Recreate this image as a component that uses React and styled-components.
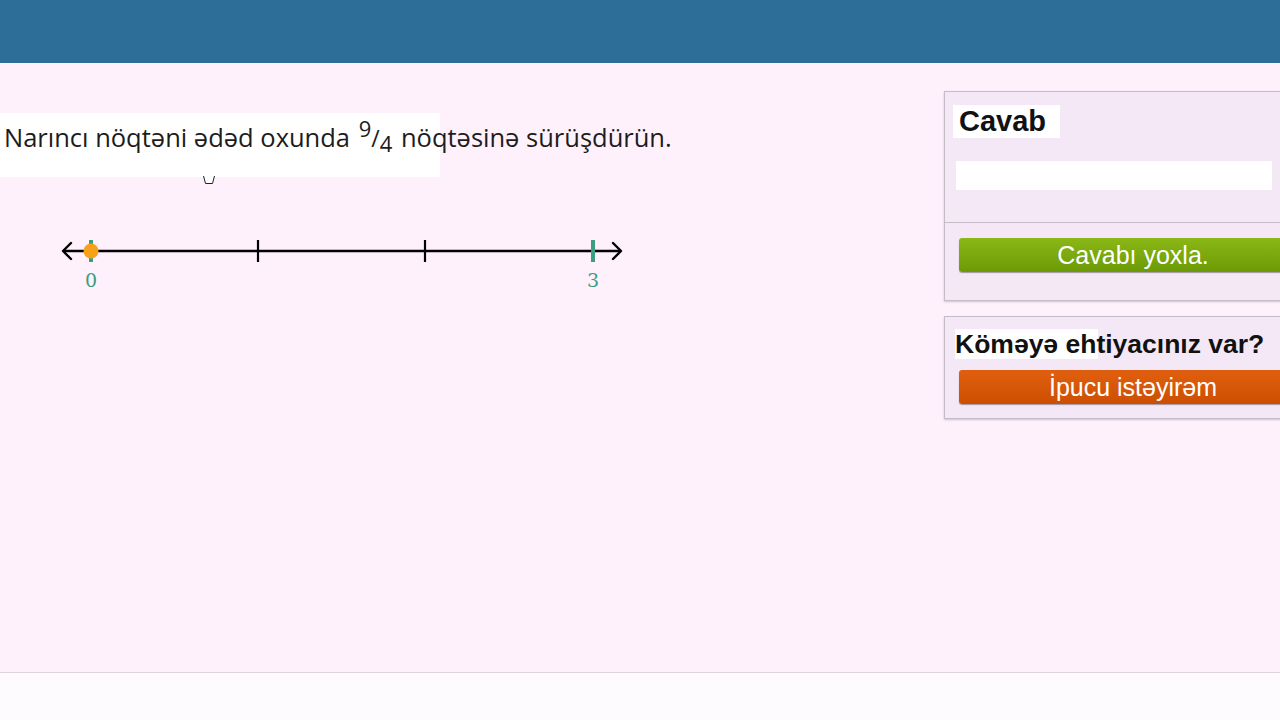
import React from "react";
import styled, { createGlobalStyle } from "styled-components";

const Global = createGlobalStyle`
  html, body { margin: 0; padding: 0; }
  body { width: 1280px; height: 720px; overflow: hidden; background: #fef1fc; }
  #root { width: 1280px; height: 720px; }
`;

const Page = styled.div`
  width: 1280px;
  height: 720px;
  display: flex;
  flex-direction: column;
  overflow: hidden;
`;

const Header = styled.div`
  height: 63px;
  flex: none;
  background: #2d6e98;
`;

const Main = styled.div`
  height: 609px;
  flex: none;
  display: flex;
  background: #fef1fc;
`;

const Left = styled.div`
  width: 944px;
  flex: none;
  display: flex;
  flex-direction: column;
  padding-top: 50px;
  box-sizing: border-box;
`;

const QuestionBox = styled.div`
  position: relative;
  width: 440px;
  height: 64px;
  background: #ffffff;
  box-sizing: border-box;
  padding-top: 6px;
  padding-left: 4px;
  font-family: "Open Sans", "Noto Sans", sans-serif;
  font-size: 25.5px;
  color: #1c1c1c;
  white-space: nowrap;
  line-height: 36px;
`;

const Sup = styled.span`
  font-size: 22px;
  position: relative;
  top: -10px;
  margin-left: 2px;
`;
const Slash = styled.span`
  font-size: 23px;
`;
const Sub = styled.span`
  font-size: 22px;
  position: relative;
  top: 5px;
  margin-right: 2px;
`;

const Marker = styled.svg`
  position: absolute;
  left: 202px;
  top: 62px;
`;

const LineWrap = styled.div`
  margin-top: 43px;
  margin-left: 50px;
  width: 590px;
  height: 70px;
`;

const Sidebar = styled.div`
  width: 360px;
  flex: none;
  display: flex;
  flex-direction: column;
  gap: 15px;
  padding-top: 28px;
  box-sizing: border-box;
`;

const Panel = styled.div`
  background: #f5e8f6;
  border: 1px solid #c6bcc8;
  border-right: none;
  box-shadow: 0 1px 2px rgba(120, 100, 120, 0.35);
  display: flex;
  flex-direction: column;
`;

const PanelSection = styled.div`
  padding: ${(p) => p.$pad};
  border-top: ${(p) => (p.$divider ? "1px solid #c6bcc8" : "none")};
  display: flex;
  flex-direction: column;
  align-items: flex-start;
`;

const Title = styled.div`
  font-family: "Liberation Sans", Arial, sans-serif;
  font-weight: bold;
  font-size: ${(p) => p.$size}px;
  color: #111;
  min-width: ${(p) => p.$min || 0}px;
  box-sizing: border-box;
  background: linear-gradient(to right, #ffffff ${(p) => p.$white}px, transparent ${(p) => p.$white}px);
  padding: ${(p) => p.$pad};
  line-height: ${(p) => p.$lh}px;
  white-space: nowrap;
`;

const Input = styled.div`
  width: 316px;
  height: 29px;
  background: #ffffff;
  margin-top: 23px;
  margin-left: 3px;
`;

const Button = styled.button`
  width: 348px;
  height: 34px;
  border: none;
  border-radius: 3px;
  background: ${(p) => p.$bg};
  box-shadow: 0 1px 1px rgba(0, 0, 0, 0.35);
  color: #fff;
  font-family: "Liberation Sans", Arial, sans-serif;
  font-size: 25px;
  padding: 0;
  margin-left: ${(p) => p.$ml}px;
  margin-top: ${(p) => p.$mt || 0}px;
  display: flex;
  align-items: center;
  justify-content: center;
  line-height: 1;
  cursor: pointer;
`;

const Footer = styled.div`
  flex: 1;
  border-top: 1px solid #ddd3dc;
  background: #fdfbfe;
`;

function NumberLine() {
  const y = 31;
  const ticks = [41, 208, 375, 543];
  return (
    <svg width="590" height="70" viewBox="0 0 590 70">
      <line x1="14" y1={y} x2="570" y2={y} stroke="#000" strokeWidth="2.4" />
      <path d={`M21 ${y - 8} L13 ${y} L21 ${y + 8}`} fill="none" stroke="#000" strokeWidth="2.4" strokeLinecap="round" strokeLinejoin="round" />
      <path d={`M563 ${y - 8} L571 ${y} L563 ${y + 8}`} fill="none" stroke="#000" strokeWidth="2.4" strokeLinecap="round" strokeLinejoin="round" />
      {ticks.map((x, i) => (
        <line
          key={x}
          x1={x}
          y1={y - 11}
          x2={x}
          y2={y + 11}
          stroke={i === 0 || i === 3 ? "#3a9e83" : "#000"}
          strokeWidth={i === 0 || i === 3 ? 4 : 2.2}
        />
      ))}
      <circle cx="41" cy={y} r="7.5" fill="#f7a019" />
      <text x="41" y={y + 36} textAnchor="middle" fontFamily="'DejaVu Serif', 'Liberation Serif', serif" fontSize="19" fill="#3a9e83">0</text>
      <text x="543" y={y + 36} textAnchor="middle" fontFamily="'DejaVu Serif', 'Liberation Serif', serif" fontSize="19" fill="#3a9e83">3</text>
    </svg>
  );
}

export default function App() {
  return (
    <Page>
      <Global />
      <Header />
      <Main>
        <Left>
          <QuestionBox>
            Narıncı nöqtəni ədəd oxunda <Sup>9</Sup><Slash>/</Slash><Sub>4</Sub> nöqtəsinə sürüşdürün.
            <Marker width="14" height="10" viewBox="0 0 14 10">
              <path d="M1.5 1 L3.5 8.5 L10.5 8.5 L12.5 1" fill="#fff" stroke="#222" strokeWidth="1" />
            </Marker>
          </QuestionBox>
          <LineWrap>
            <NumberLine />
          </LineWrap>
        </Left>
        <Sidebar>
          <Panel>
            <PanelSection $pad="13px 0 32px 8px">
              <Title $size={29} $white={107} $min={107} $pad="0 6px" $lh={33}>Cavab</Title>
              <Input />
            </PanelSection>
            <PanelSection $divider $pad="15px 0 28px 14px">
              <Button $bg="linear-gradient(#8ab817, #6c9a06)" $ml={0}>Cavabı yoxla.</Button>
            </PanelSection>
          </Panel>
          <Panel>
            <PanelSection $pad="12px 0 14px 10px">
              <Title $size={26.5} $white={143} $pad="0 0" $lh={30}>Köməyə ehtiyacınız var?</Title>
              <Button $bg="linear-gradient(#e05f0f, #cf4f02)" $ml={4} $mt={11}>İpucu istəyirəm</Button>
            </PanelSection>
          </Panel>
        </Sidebar>
      </Main>
      <Footer />
    </Page>
  );
}
